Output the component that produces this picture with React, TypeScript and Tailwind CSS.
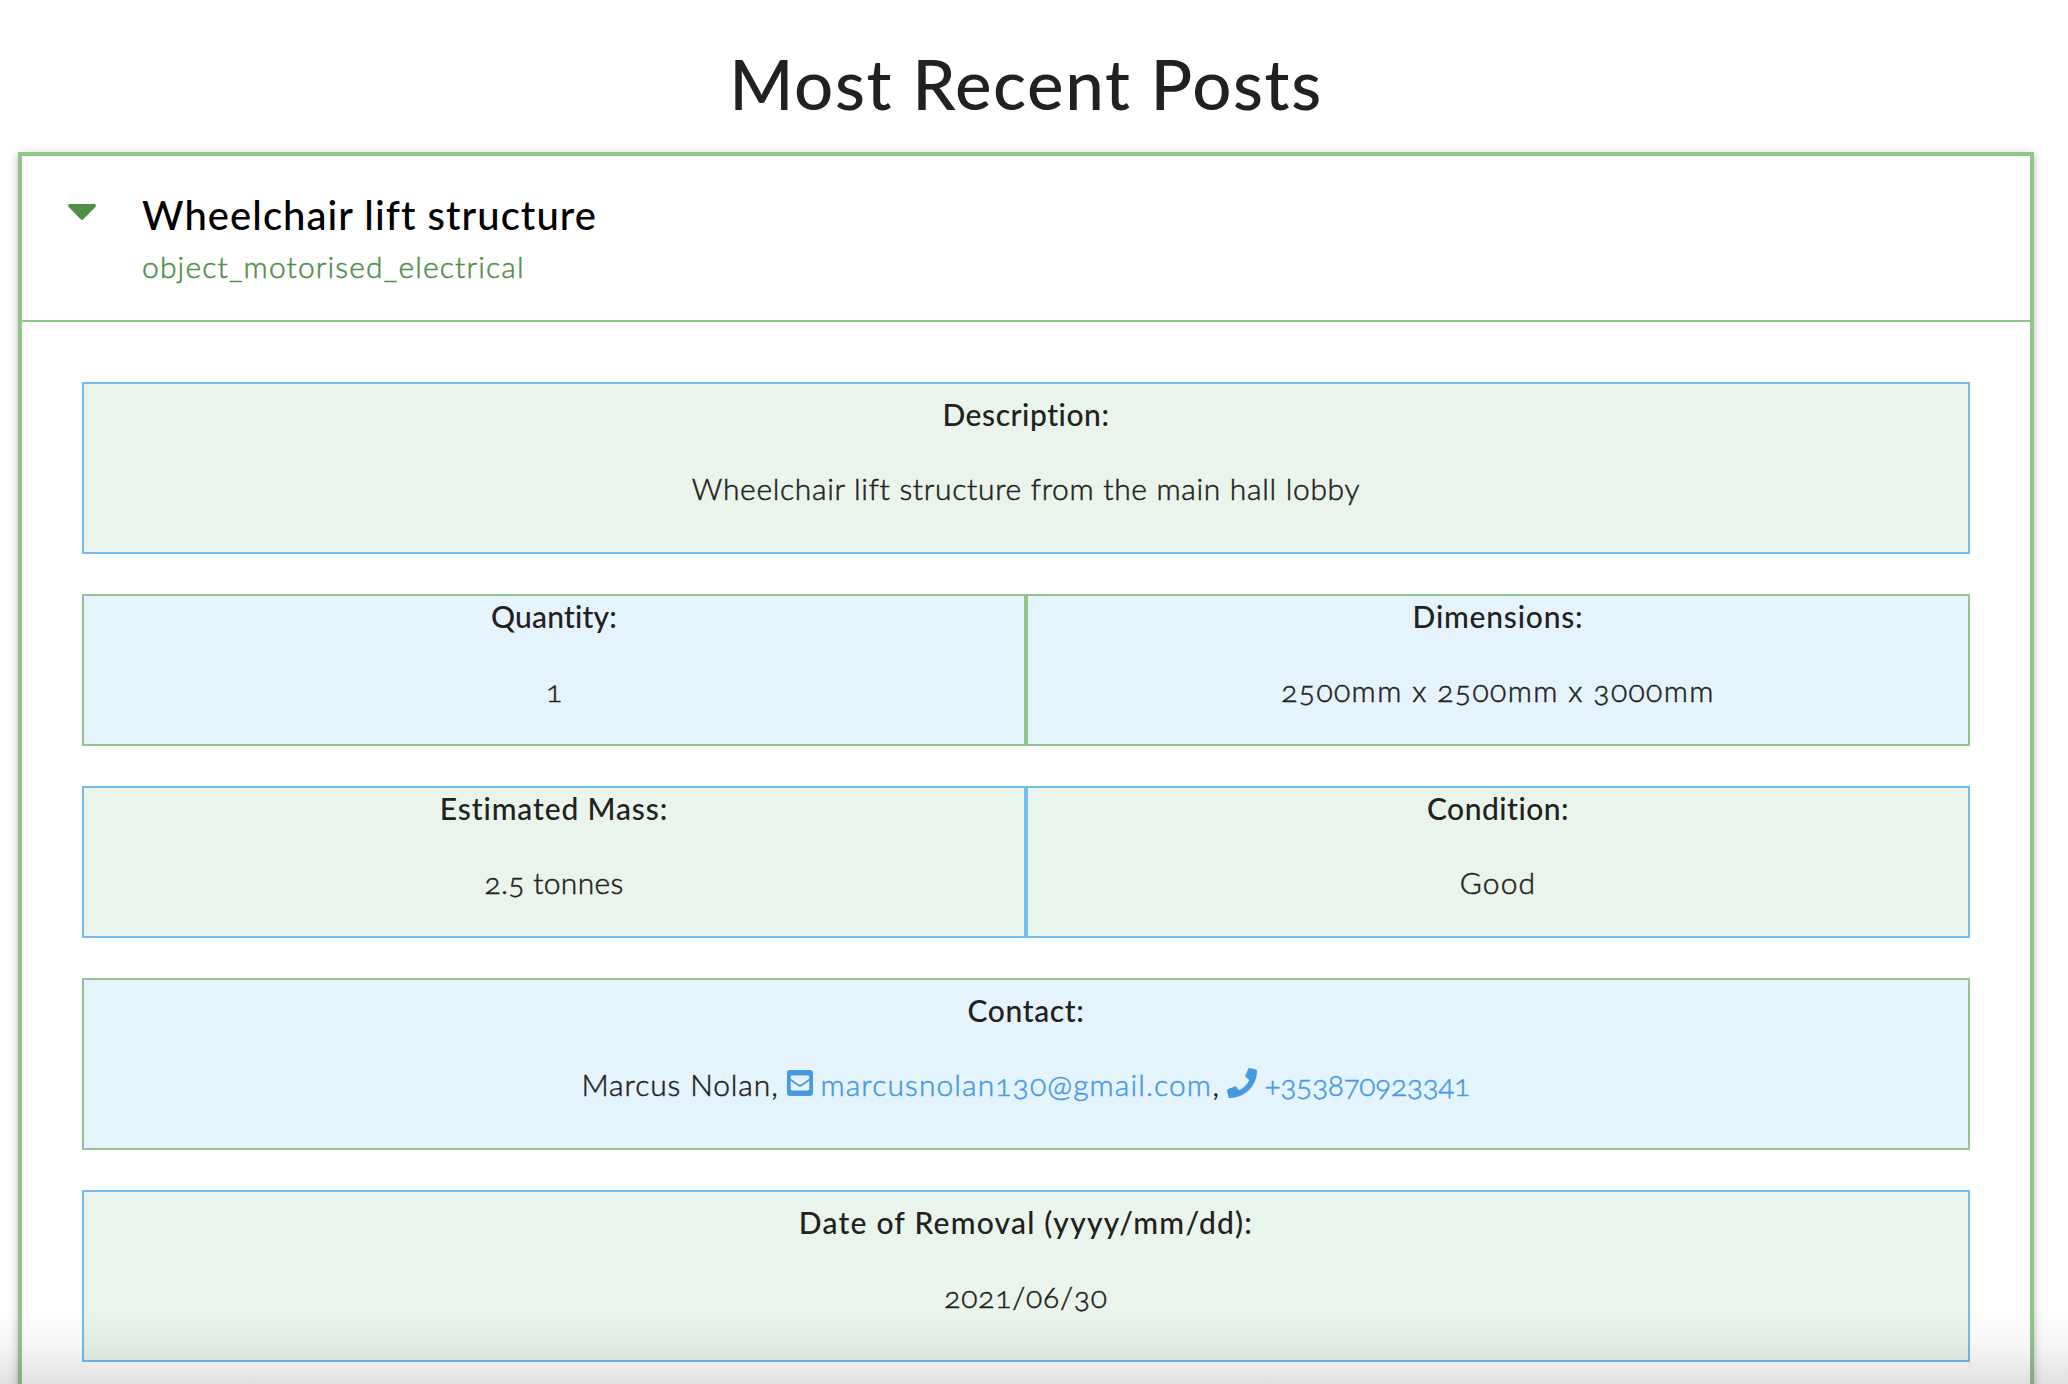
import type { ReactNode } from "react";
import { FaEnvelopeSquare, FaPhone } from "react-icons/fa";

type Tone = "green" | "blue";

const tones: Record<Tone, string> = {
  green: "bg-[#e9f4ea] border-[#6fbef3]",
  blue: "bg-[#e5f3fd] border-[#91c68a]",
};

function Label({ className, children }: { className: string; children: ReactNode }) {
  return <p className={`leading-[41px] font-medium whitespace-nowrap ${className}`}>{children}</p>;
}

function Value({ className, children }: { className: string; children: ReactNode }) {
  return (
    <p
      className={`mt-[33px] leading-[41px] font-light whitespace-nowrap oldstyle-nums [-webkit-text-stroke:0.5px_currentColor] ${className}`}
    >
      {children}
    </p>
  );
}

function WideBox({ tone, children }: { tone: Tone; children: ReactNode }) {
  return <div className={`h-[172px] border-2 pt-[10px] text-center ${tones[tone]}`}>{children}</div>;
}

function HalfBox({ tone, children }: { tone: Tone; children: ReactNode }) {
  return <div className={`h-[152px] border-2 text-center ${tones[tone]}`}>{children}</div>;
}

export default function App() {
  return (
    <div className="relative h-[1384px] w-full overflow-hidden bg-white px-[18px] pt-[44px] font-['Lato',sans-serif] text-[30px] text-[#212121]">
      <h1 className="w-[2016px] text-center text-[69px] leading-[80px] font-medium tracking-[1.6px]">
        Most Recent Posts
      </h1>

      <section className="mt-[28px] h-[1400px] w-[2016px] border-4 border-[#91c68a] bg-white shadow-[0_4px_4px_0_rgba(0,0,0,0.14),0_6px_2px_-4px_rgba(0,0,0,0.12),0_2px_10px_0_rgba(0,0,0,0.2)]">
        <header className="flex h-[166px] border-b-2 border-[#91c68a]">
          <svg className="mt-[48px] ml-[46px] h-[16px] w-[28px] shrink-0" viewBox="0 0 28 16" fill="#4f8f46">
            <path d="M2 0H26C28 0 28.4 1.6 27.4 2.9L15.3 15.2Q14 16.5 12.7 15.2L.6 2.9C-.4 1.6 0 0 2 0Z" />
          </svg>
          <div className="ml-[46px] pt-[35px]">
            <h2 className="text-[40px] leading-[48px] font-medium tracking-[1.05px] text-black">
              Wheelchair lift structure
            </h2>
            <p className="mt-[5px] leading-[45px] font-light tracking-[1.15px] text-[#4f8f46] [-webkit-text-stroke:0.5px_currentColor]">
              object_motorised_electrical
            </p>
          </div>
        </header>

        <div className="flex flex-col gap-[40px] px-[60px] pt-[60px]">
          <WideBox tone="green">
            <Label className="tracking-[0.55px]">Description:</Label>
            <Value className="tracking-[0.68px]">Wheelchair lift structure from the main hall lobby</Value>
          </WideBox>

          <div className="grid grid-cols-2">
            <HalfBox tone="blue">
              <Label className="tracking-[0.2px]">Quantity:</Label>
              <Value className="">1</Value>
            </HalfBox>
            <HalfBox tone="blue">
              <Label className="tracking-[0.8px]">Dimensions:</Label>
              <Value className="tracking-[1.4px]">2500mm x 2500mm x 3000mm</Value>
            </HalfBox>
          </div>

          <div className="grid grid-cols-2">
            <HalfBox tone="green">
              <Label className="tracking-[0.88px]">Estimated Mass:</Label>
              <Value className="tracking-[0.3px]">2.5 tonnes</Value>
            </HalfBox>
            <HalfBox tone="green">
              <Label className="tracking-[0.48px]">Condition:</Label>
              <Value className="tracking-[1.2px]">Good</Value>
            </HalfBox>
          </div>

          <WideBox tone="blue">
            <Label className="tracking-[0.65px]">Contact:</Label>
            <div className="mt-[33px] flex justify-center leading-[41px] font-light whitespace-nowrap oldstyle-nums [-webkit-text-stroke:0.5px_currentColor]">
              <span className="w-[205px] text-left tracking-[0.88px]">Marcus Nolan,</span>
              <a className="flex w-[393px] text-[#459ae2]">
                <FaEnvelopeSquare className="mt-[4px] h-[30px] w-[26px] shrink-0 [-webkit-text-stroke:0]" strokeWidth={0} />
                <span className="ml-[8px] tracking-[1.1px]">marcusnolan130@gmail.com</span>
              </a>
              <span className="ml-[33px] w-[14px] text-left">,</span>
              <a className="flex w-[244px] text-[#459ae2]">
                <FaPhone className="mt-[4px] size-[30px] shrink-0" strokeWidth={0} />
                <span className="ml-[8px] tracking-[-0.4px]">+353870923341</span>
              </a>
            </div>
          </WideBox>

          <WideBox tone="green">
            <Label className="tracking-[1.22px]">Date of Removal (yyyy/mm/dd):</Label>
            <Value className="tracking-[0.8px]">2021/06/30</Value>
          </WideBox>
        </div>
      </section>

      <div className="pointer-events-none absolute inset-x-0 bottom-0 h-[74px] bg-linear-to-b from-black/0 via-black/4 to-black/12" />
    </div>
  );
}
